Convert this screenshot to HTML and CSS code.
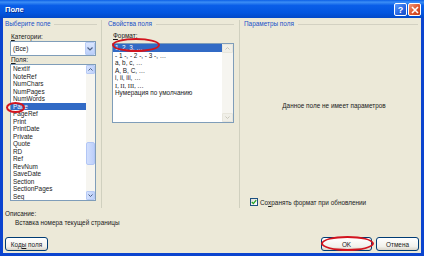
FILE: index.html
```html
<!DOCTYPE html>
<html lang="ru">
<head>
<meta charset="utf-8">
<title>Поле</title>
<link rel="stylesheet" href="styles.css">
</head>
<body>
<div class="window">
  <div class="titlebar">
    <span class="title">Поле</span>
    <div class="tb-btns">
      <span class="tb-btn tb-help">?</span>
      <span class="tb-btn tb-close">
        <svg width="8" height="8" viewBox="0 0 8 8"><path d="M1 1L7 7M7 1L1 7" stroke="#fff" stroke-width="1.6"/></svg>
      </span>
    </div>
  </div>
  <div class="frame">
    <div class="columns">
      <section class="col col-left">
        <div class="group-title">Выберите поле</div>
        <div class="field">
          <div class="label"><u>К</u>атегории:</div>
          <div class="combo">
            <span class="combo-text">(Все)</span>
            <span class="combo-btn"><svg width="6" height="4" viewBox="0 0 6 4"><path d="M0.5 0.5L3 3L5.5 0.5" fill="none" stroke="#4D6185" stroke-width="1.2"/></svg></span>
          </div>
          <div class="label"><u>П</u>оля:</div>
          <div class="listbox list-fields">
            <div class="items">
              <div class="item">NextIf</div>
              <div class="item">NoteRef</div>
              <div class="item">NumChars</div>
              <div class="item">NumPages</div>
              <div class="item">NumWords</div>
              <div class="item sel">Page</div>
              <div class="item">PageRef</div>
              <div class="item">Print</div>
              <div class="item">PrintDate</div>
              <div class="item">Private</div>
              <div class="item">Quote</div>
              <div class="item">RD</div>
              <div class="item">Ref</div>
              <div class="item">RevNum</div>
              <div class="item">SaveDate</div>
              <div class="item">Section</div>
              <div class="item">SectionPages</div>
              <div class="item">Seq</div>
            </div>
            <div class="sb">
              <span class="sb-btn"><svg width="5" height="3" viewBox="0 0 5 3"><path d="M0.5 2.5L2.5 0.5L4.5 2.5" fill="none" stroke="#4D6185" stroke-width="1"/></svg></span>
              <div class="sb-track"><div class="sb-thumb"></div></div>
              <span class="sb-btn"><svg width="5" height="3" viewBox="0 0 5 3"><path d="M0.5 0.5L2.5 2.5L4.5 0.5" fill="none" stroke="#4D6185" stroke-width="1"/></svg></span>
            </div>
          </div>
        </div>
      </section>
      <section class="col col-mid">
        <div class="group-title">Свойства поля</div>
        <div class="field">
          <div class="label"><u>Ф</u>ормат:</div>
          <div class="listbox list-format">
            <div class="items">
              <div class="item sel">1, 2, 3, …</div>
              <div class="item">- 1 -, - 2 -, - 3 -, …</div>
              <div class="item">a, b, c, …</div>
              <div class="item">A, B, C, …</div>
              <div class="item">i, ii, iii, …</div>
              <div class="item serif">I, II, III, …</div>
              <div class="item">Нумерация по умолчанию</div>
            </div>
            <div class="sb sb-disabled">
              <span class="sb-btn"><svg width="5" height="3" viewBox="0 0 5 3"><path d="M0.5 2.5L2.5 0.5L4.5 2.5" fill="none" stroke="#C9C7BA" stroke-width="1"/></svg></span>
              <div class="sb-track"></div>
              <span class="sb-btn"><svg width="5" height="3" viewBox="0 0 5 3"><path d="M0.5 0.5L2.5 2.5L4.5 0.5" fill="none" stroke="#C9C7BA" stroke-width="1"/></svg></span>
            </div>
          </div>
        </div>
      </section>
      <section class="col col-right">
        <div class="group-title">Параметры поля</div>
        <div class="message">Данное поле не имеет параметров</div>
        <div class="check-row">
          <span class="checkbox"><svg width="6" height="6" viewBox="0 0 6 6"><path d="M0.8 3L2.4 4.6L5.2 1.2" fill="none" stroke="#21A121" stroke-width="1.3"/></svg></span>
          <span>Со<u>х</u>ранять формат при обновлении</span>
        </div>
      </section>
    </div>
    <div class="desc">
      <div class="label desc-title">Описание:</div>
      <div class="label desc-text">Вставка номера текущей страницы</div>
    </div>
    <div class="footer">
      <button class="btn btn-codes"><span>Код<u>ы</u> поля</span></button>
      <span class="spacer"></span>
      <button class="btn btn-ok"><span>OK</span></button>
      <button class="btn btn-cancel"><span>Отмена</span></button>
    </div>
  </div>
  <span class="mark mark-format"></span>
  <span class="mark mark-page"></span>
  <span class="mark mark-ok"></span>
</div>
</body>
</html>
```
FILE: styles.css
```css
* { box-sizing: border-box; }
html, body { margin: 0; padding: 0; background: #ECE9D8; }
body {
  font-family: "Liberation Sans", Arial, sans-serif;
  font-size: 6.4px;
  color: #1a1a1a;
}
u { text-decoration: underline; text-underline-offset: 1px; }

.window {
  position: relative;
  width: 424px;
  height: 256px;
  display: flex;
  flex-direction: column;
  background: #ECE9D8;
  overflow: hidden;
}

.titlebar {
  height: 18px;
  flex: none;
  display: flex;
  align-items: center;
  padding: 0 3px 0 5px;
  background: linear-gradient(#0B5FE6 0%, #3C8EF6 12%, #0A5EE8 30%, #0356E0 70%, #0249C8 100%);
}
.title {
  flex: 1;
  color: #fff;
  font-weight: bold;
  font-size: 7.5px;
  text-shadow: 1px 1px 0 #0A2D8C;
}
.tb-btns { display: flex; gap: 1px; margin-top: 1px; }
.tb-btn {
  width: 13px;
  height: 13px;
  border: 1px solid #fff;
  border-radius: 2px;
  display: flex;
  align-items: center;
  justify-content: center;
  color: #fff;
  font-weight: bold;
  font-size: 9px;
}
.tb-help { background: linear-gradient(135deg, #5B9BFF, #2563E0 60%, #1A4FC4); }
.tb-close { background: linear-gradient(135deg, #F09A7C, #E05A32 50%, #C43A16); }

.frame {
  flex: 1;
  display: flex;
  flex-direction: column;
  border: 3px solid #0B44CF;
  border-top: 0;
  padding-top: 2px;
}

.columns {
  display: grid;
  grid-template-columns: 99px 138px 1fr;
  height: 188px;
}
.col { display: flex; flex-direction: column; }
.col-left { border-right: 1px solid #D0D0BF; padding: 0 4px 0 2px; }
.col-mid { border-right: 1px solid #D0D0BF; padding: 0 5px 0 6px; }
.col-right { padding: 0 3px 0 4px; }

.group-title {
  display: flex;
  align-items: center;
  gap: 4px;
  height: 8px;
  line-height: 8px;
  color: #2050C8;
  white-space: nowrap;
}
.group-title::after {
  content: "";
  flex: 1;
  height: 1px;
  background: #D3D1C2;
}

.label { height: 8px; line-height: 8px; padding-left: 1px; white-space: nowrap; }

.col-left .field { margin-left: 5px; margin-top: 5px; }
.col-mid .field { margin-left: 4px; margin-top: 4px; }

.combo {
  width: 86px;
  height: 15px;
  border: 1px solid #7F9DB9;
  background: #fff;
  display: flex;
  align-items: center;
}
.combo-text { flex: 1; padding-left: 2px; }
.combo-btn {
  width: 10px;
  height: 13px;
  border: 1px solid #B9CCF6;
  border-radius: 1px;
  background: linear-gradient(#DCE7FE, #BBCFFA);
  display: flex;
  align-items: center;
  justify-content: center;
}

.listbox {
  border: 1px solid #7F9DB9;
  background: #fff;
  display: flex;
}
.list-fields { width: 86px; height: 137px; }
.list-format { width: 122px; height: 80px; margin-top: 3px; }

.items { flex: 1; overflow: hidden; }
.item {
  height: 7.5px;
  line-height: 7.5px;
  padding-left: 2px;
  white-space: nowrap;
}
.item.sel { background: #316AC5; color: #fff; }
.item.serif { font-family: "Liberation Serif", "Times New Roman", serif; }

.sb {
  width: 9px;
  display: flex;
  flex-direction: column;
  background: #F6F5F0;
}
.sb-btn {
  height: 9px;
  flex: none;
  border: 1px solid #B7CAF5;
  border-radius: 1px;
  background: linear-gradient(90deg, #D4E1FD, #BED0FA);
  display: flex;
  align-items: center;
  justify-content: center;
}
.sb-track { flex: 1; }
.sb-thumb {
  margin-top: 68px;
  height: 23px;
  border: 1px solid #B2C6F5;
  border-radius: 2px;
  background: linear-gradient(90deg, #D2DFFD, #BDCFFA);
}
.sb-disabled .sb-btn {
  border-color: #E8E6DC;
  background: #F0EFE8;
}
.list-format .sb { width: 11px; }

.message {
  margin-top: 74px;
  height: 8px;
  line-height: 8px;
  text-align: center;
  padding-left: 6px;
}
.check-row {
  margin-top: auto;
  margin-bottom: 2px;
  margin-left: 6px;
  height: 8px;
  display: flex;
  align-items: center;
  gap: 2px;
  white-space: nowrap;
}
.checkbox {
  width: 8px;
  height: 8px;
  border: 1px solid #1C5180;
  background: linear-gradient(135deg, #DCDCD7, #fff);
  display: flex;
  align-items: center;
  justify-content: center;
}

.desc { margin-top: 2px; }
.desc-title { padding-left: 2px; }
.desc-text { padding-left: 12px; margin-top: 1px; }

.footer {
  margin-top: 10px;
  display: flex;
  align-items: center;
  gap: 4px;
  padding: 0 2px 0 2px;
}
.spacer { flex: 1; }
.btn {
  height: 14px;
  border: 1px solid #003C74;
  border-radius: 3px;
  background: linear-gradient(#FFFFFF, #F2F1EC 70%, #D9D4C8);
  font-family: "Liberation Sans", Arial, sans-serif;
  font-size: 6.4px;
  color: #1a1a1a;
  padding: 0;
  display: flex;
  align-items: center;
  justify-content: center;
}
.btn-codes { width: 43px; }
.btn-ok { width: 51px; }
.btn-cancel { width: 43px; }

.mark {
  position: absolute;
  border: 2px solid #D2141E;
  border-radius: 50%;
}
.mark-format { left: 112px; top: 38px; width: 48px; height: 14px; }
.mark-page { left: 6px; top: 102px; width: 19px; height: 11px; }
.mark-ok { left: 321px; top: 236px; width: 53px; height: 15px; }
```
